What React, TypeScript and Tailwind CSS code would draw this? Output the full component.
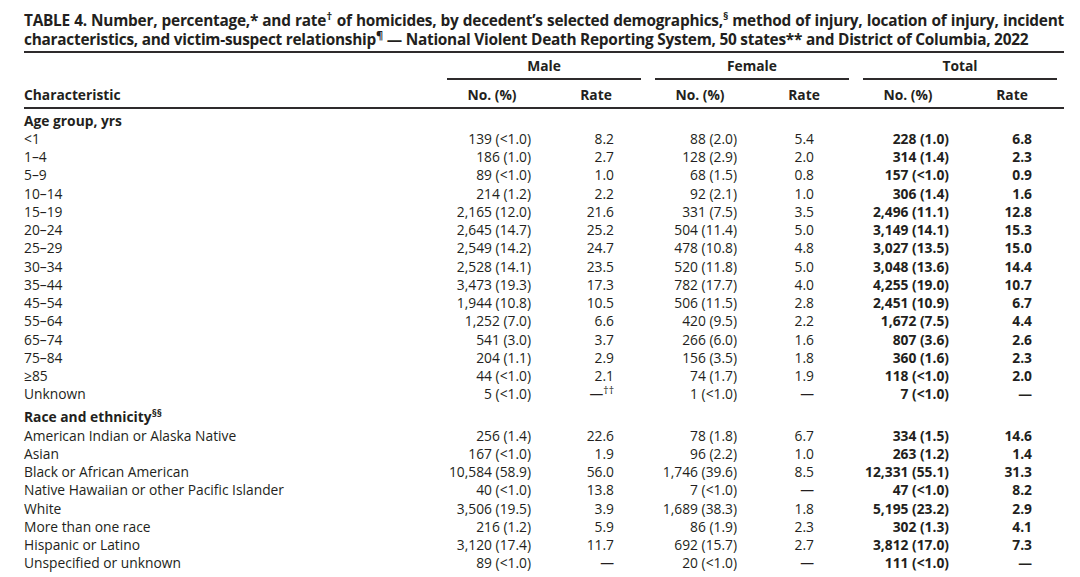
import React from "react";

type Row = [string, string, string, string, string, string, string];

const ageRows: Row[] = [
  ["<1", "139 (<1.0)", "8.2", "88 (2.0)", "5.4", "228 (1.0)", "6.8"],
  ["1–4", "186 (1.0)", "2.7", "128 (2.9)", "2.0", "314 (1.4)", "2.3"],
  ["5–9", "89 (<1.0)", "1.0", "68 (1.5)", "0.8", "157 (<1.0)", "0.9"],
  ["10–14", "214 (1.2)", "2.2", "92 (2.1)", "1.0", "306 (1.4)", "1.6"],
  ["15–19", "2,165 (12.0)", "21.6", "331 (7.5)", "3.5", "2,496 (11.1)", "12.8"],
  ["20–24", "2,645 (14.7)", "25.2", "504 (11.4)", "5.0", "3,149 (14.1)", "15.3"],
  ["25–29", "2,549 (14.2)", "24.7", "478 (10.8)", "4.8", "3,027 (13.5)", "15.0"],
  ["30–34", "2,528 (14.1)", "23.5", "520 (11.8)", "5.0", "3,048 (13.6)", "14.4"],
  ["35–44", "3,473 (19.3)", "17.3", "782 (17.7)", "4.0", "4,255 (19.0)", "10.7"],
  ["45–54", "1,944 (10.8)", "10.5", "506 (11.5)", "2.8", "2,451 (10.9)", "6.7"],
  ["55–64", "1,252 (7.0)", "6.6", "420 (9.5)", "2.2", "1,672 (7.5)", "4.4"],
  ["65–74", "541 (3.0)", "3.7", "266 (6.0)", "1.6", "807 (3.6)", "2.6"],
  ["75–84", "204 (1.1)", "2.9", "156 (3.5)", "1.8", "360 (1.6)", "2.3"],
  ["≥85", "44 (<1.0)", "2.1", "74 (1.7)", "1.9", "118 (<1.0)", "2.0"],
  ["Unknown", "5 (<1.0)", "—††", "1 (<1.0)", "—", "7 (<1.0)", "—"],
];

const raceRows: Row[] = [
  ["American Indian or Alaska Native", "256 (1.4)", "22.6", "78 (1.8)", "6.7", "334 (1.5)", "14.6"],
  ["Asian", "167 (<1.0)", "1.9", "96 (2.2)", "1.0", "263 (1.2)", "1.4"],
  ["Black or African American", "10,584 (58.9)", "56.0", "1,746 (39.6)", "8.5", "12,331 (55.1)", "31.3"],
  ["Native Hawaiian or other Pacific Islander", "40 (<1.0)", "13.8", "7 (<1.0)", "—", "47 (<1.0)", "8.2"],
  ["White", "3,506 (19.5)", "3.9", "1,689 (38.3)", "1.8", "5,195 (23.2)", "2.9"],
  ["More than one race", "216 (1.2)", "5.9", "86 (1.9)", "2.3", "302 (1.3)", "4.1"],
  ["Hispanic or Latino", "3,120 (17.4)", "11.7", "692 (15.7)", "2.7", "3,812 (17.0)", "7.3"],
  ["Unspecified or unknown", "89 (<1.0)", "—", "20 (<1.0)", "—", "111 (<1.0)", "—"],
];

// right padding of each numeric column, matched to the print layout
const cellPad = ["pr-[13px]", "pr-[34px]", "pr-[15px]", "pr-[42px]", "pr-[11px]", "pr-[32px]"];

const Cell = ({ value, i }: { value: string; i: number }) => {
  const bold = i >= 4 ? "font-bold" : "";
  if (value.endsWith("††")) {
    return (
      <div className={`text-right ${cellPad[i]} ${bold}`}>
        —<sup className="text-[10.5px] leading-none">††</sup>
      </div>
    );
  }
  return <div className={`text-right ${cellPad[i]} ${bold}`}>{value}</div>;
};

const DataRow = ({ row }: { row: Row }) => (
  <div className="grid grid-cols-[416px_repeat(6,104px)] h-[18.25px] leading-[18.25px] whitespace-nowrap">
    <div>{row[0]}</div>
    {row.slice(1).map((v, i) => (
      <Cell key={i} value={v} i={i} />
    ))}
  </div>
);

const Group = ({ title }: { title: string }) => (
  <div className="w-[208px] pt-[3.5px] pb-[3.25px] font-bold">
    <div className="h-[18.25px] leading-[18.25px] text-center">{title}</div>
    <div className="mx-[7px] mt-[3.25px] h-[2px] bg-[#2e2b2c]" />
    <div className="mt-[5.5px] flex">
      <div className="w-[104px] h-[18.25px] leading-[18.25px] text-center">No. (%)</div>
      <div className="w-[104px] h-[18.25px] leading-[18.25px] text-center">Rate</div>
    </div>
  </div>
);

export default function App() {
  return (
    <div className="min-h-screen bg-white text-[#231f20] font-['Open_Sans',sans-serif] text-[13.8px]">
      <div className="w-[1040px] ml-[24px] pt-[10.5px]">
        <h1 className="text-[15.4px] font-bold leading-[19px] tracking-[-0.25px] text-justify">
          TABLE 4. Number, percentage,* and rate<sup className="text-[11px] leading-none">†</sup> of homicides, by
          decedent’s selected demographics,<sup className="text-[11px] leading-none">§</sup> method of injury, location
          of injury, incident characteristics, and victim-suspect relationship
          <sup className="text-[11px] leading-none">¶</sup> — National Violent Death Reporting System, 50 states** and
          District of Columbia, 2022
        </h1>
        <div className="mt-[2.5px] h-[2px] bg-[#2e2b2c]" />

        <div className="flex">
          <div className="w-[416px] flex items-end pb-[3.25px]">
            <div className="h-[18.25px] leading-[18.25px] font-bold">Characteristic</div>
          </div>
          <Group title="Male" />
          <Group title="Female" />
          <Group title="Total" />
        </div>
        <div className="h-[2px] bg-[#2e2b2c]" />

        <div className="mt-[2.5px]">
          <div className="h-[18.25px] leading-[18.25px] font-bold">Age group, yrs</div>
          {ageRows.map((r) => (
            <DataRow key={r[0]} row={r} />
          ))}
          <div className="mt-[4.75px] h-[18.25px] leading-[18.25px] font-bold">
            Race and ethnicity<sup className="text-[10.5px] leading-none">§§</sup>
          </div>
          {raceRows.map((r) => (
            <DataRow key={r[0]} row={r} />
          ))}
        </div>
      </div>
    </div>
  );
}
